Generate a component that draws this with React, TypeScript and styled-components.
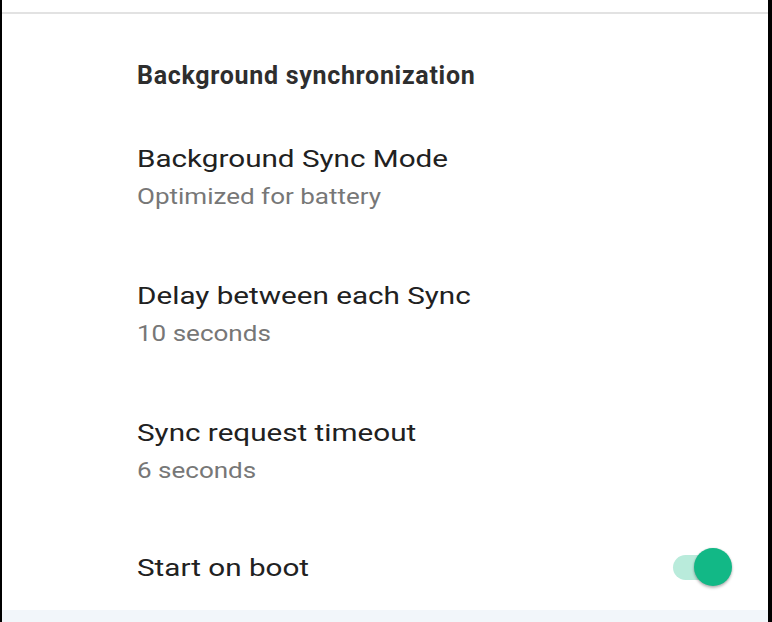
import React from "react";
import styled, { createGlobalStyle } from "styled-components";

const GlobalStyle = createGlobalStyle`
  html, body { margin: 0; padding: 0; background: #ffffff; }
  body { font-family: Roboto, "Noto Sans", "Liberation Sans", sans-serif; }
  * { box-sizing: border-box; }
`;

const Frame = styled.div`
  display: flex;
  flex-direction: column;
  height: 622px;
  width: 772px;
  border-left: 2px solid #000;
  border-right: 4px solid #000;
  background: #fff;
  overflow: hidden;
`;

const TopGap = styled.div`
  height: 12px;
  flex: none;
`;

const Divider = styled.div`
  height: 2px;
  background: #e2e2e2;
  flex: none;
`;

const Content = styled.div`
  flex: 1;
  display: flex;
  flex-direction: column;
  padding: 46px 36px 0 135px;
`;

const Heading = styled.div`
  font-size: 25px;
  line-height: 32px;
  font-weight: 700;
  letter-spacing: 0.7px;
  color: #2e2e2e;
  margin-bottom: 51px;
`;

const Pref = styled.div`
  display: flex;
  flex-direction: column;
  margin-bottom: 69px;
`;

const Title = styled.div`
  font-size: 24.5px;
  line-height: 32px;
  color: #212121;
  white-space: nowrap;
  transform: scaleX(1.21);
  transform-origin: left center;
`;

const Summary = styled.div`
  font-size: 21.5px;
  line-height: 28px;
  color: #777777;
  margin-top: 8px;
  white-space: nowrap;
  transform: scaleX(1.21);
  transform-origin: left center;
`;

const SwitchRow = styled.div`
  display: flex;
  align-items: center;
  justify-content: space-between;
  margin-top: -6px;
`;

const Toggle = styled.div`
  position: relative;
  width: 59px;
  height: 38px;
  margin-bottom: 1px;
  flex: none;
`;

const Track = styled.div`
  position: absolute;
  left: 0;
  top: 6.5px;
  width: 50px;
  height: 25px;
  border-radius: 12.5px;
  background: #b9ebdb;
`;

const Thumb = styled.div`
  position: absolute;
  right: 0;
  top: 0;
  width: 38px;
  height: 38px;
  border-radius: 50%;
  background: #12b886;
  box-shadow: 0 2px 3px rgba(0, 0, 0, 0.28), 0 0 2px rgba(0, 0, 0, 0.12);
`;

const BottomStrip = styled.div`
  height: 12px;
  flex: none;
  background: #f2f6fa;
`;

const prefs = [
  { title: "Background Sync Mode", summary: "Optimized for battery" },
  { title: "Delay between each Sync", summary: "10 seconds" },
  { title: "Sync request timeout", summary: "6 seconds" },
];

export default function App() {
  return (
    <>
      <GlobalStyle />
      <Frame>
        <TopGap />
        <Divider />
        <Content>
          <Heading>Background synchronization</Heading>
          {prefs.map((p) => (
            <Pref key={p.title}>
              <Title>{p.title}</Title>
              <Summary>{p.summary}</Summary>
            </Pref>
          ))}
          <SwitchRow>
            <Title>Start on boot</Title>
            <Toggle>
              <Track />
              <Thumb />
            </Toggle>
          </SwitchRow>
        </Content>
        <BottomStrip />
      </Frame>
    </>
  );
}
